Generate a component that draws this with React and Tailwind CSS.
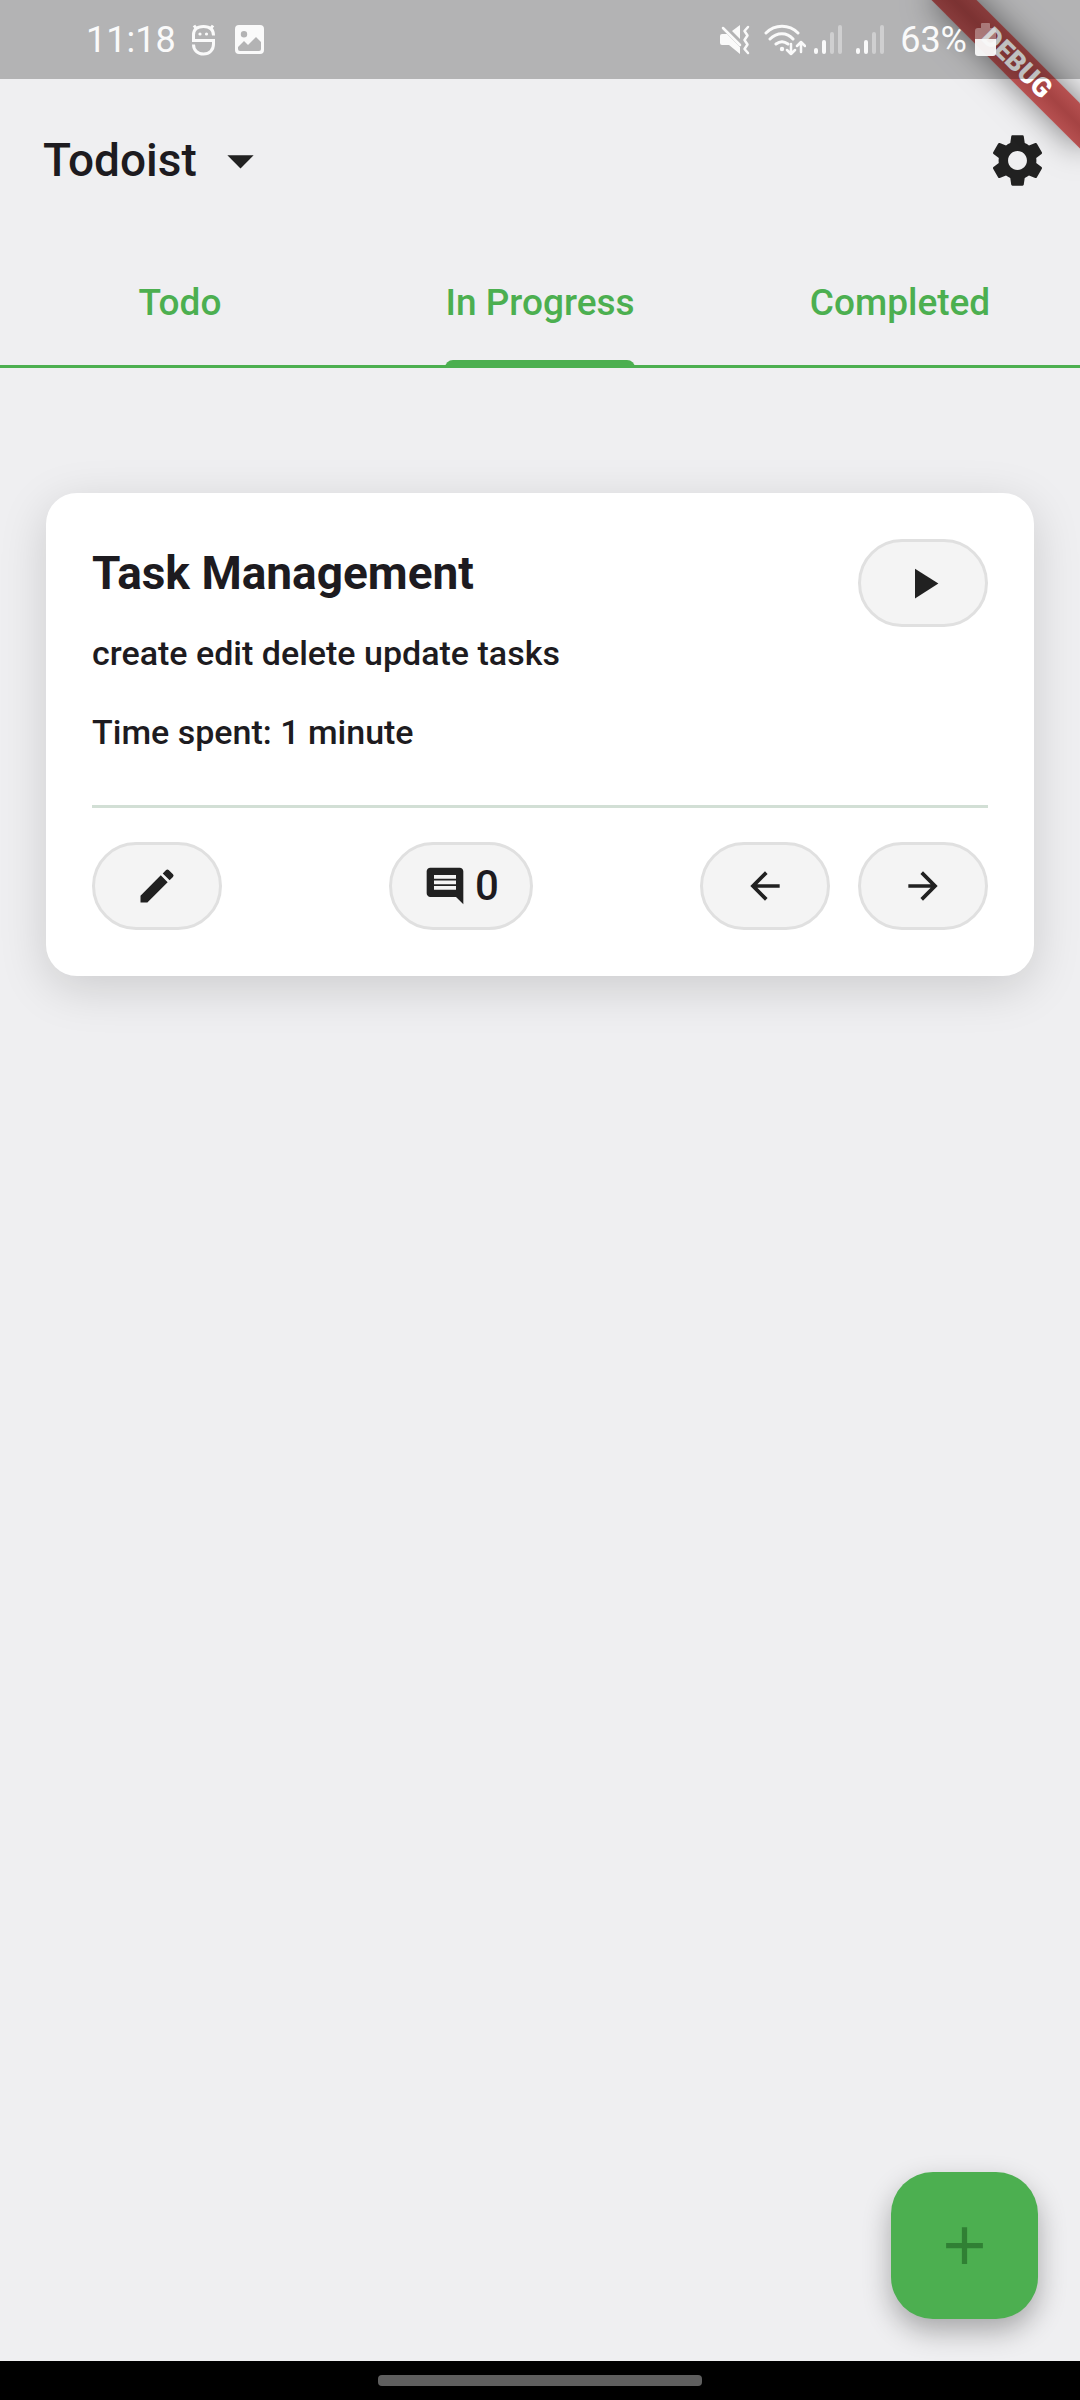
import { MdAdd, MdArrowBack, MdArrowDropDown, MdArrowForward, MdComment, MdEdit, MdPlayArrow, MdSettings } from "react-icons/md";

function GameIcon() {
  return (
    <svg width="23" height="32" viewBox="0 0 23 32" fill="none" stroke="#fafafa" strokeWidth="3" aria-hidden="true">
      <path d="M21.500 11.500C21.500 5.500 18 2.500 11.500 2.500S1.500 5.500 1.500 11v5.500h20V20c0 6-4 10-10 10S1.500 26 1.500 20.500" />
      <path d="M4.500 5 2 1.500M18.500 5 21 1.500" />
      <circle cx="8" cy="10" r="1.600" fill="#fafafa" stroke="none" />
      <circle cx="14.500" cy="10" r="1.600" fill="#fafafa" stroke="none" />
    </svg>
  );
}

function GalleryIcon() {
  return (
    <svg width="29" height="29" viewBox="0 0 29 29" aria-hidden="true">
      <path
        fill="#fafafa"
        fillRule="evenodd"
        d="M4 0h21a4 4 0 0 1 4 4v21a4 4 0 0 1-4 4H4a4 4 0 0 1-4-4V4a4 4 0 0 1 4-4ZM9 6a3.200 3.200 0 1 0 0 6.400A3.200 3.200 0 0 0 9 6ZM3 22v2a2 2 0 0 0 2 2h19a2 2 0 0 0 2-2v-7l-5-5-8 8-4-4Z"
      />
    </svg>
  );
}

function MutedIcon() {
  return (
    <svg width="30" height="30" viewBox="0 0 30 30" aria-hidden="true">
      <path fill="#fafafa" d="M2 9h5l13 13v7L9 20H2a2 2 0 0 1-2-2v-7a2 2 0 0 1 2-2ZM12 6l8-6v14Z" />
      <path fill="none" stroke="#fafafa" strokeWidth="2.500" strokeLinecap="round" strokeLinejoin="round" d="m3 3 17 17M28 2l-3.500 4 3 4.500-3 4.500 3 4.500-3 4.500 3.500 4" />
    </svg>
  );
}

function WifiIcon() {
  return (
    <svg width="42" height="32" viewBox="0 0 42 32" fill="none" stroke="#fafafa" strokeWidth="3" strokeLinecap="round" strokeLinejoin="round" aria-hidden="true">
      <path d="M2 9c9-9 23-9 32 0M6 15c7-7 17-7 23 0M12 20c4-3 8-3 12 0" />
      <circle cx="18" cy="25" r="2.200" fill="#fafafa" stroke="none" />
      <path strokeWidth="2.500" d="M27 20v10m-4-4 4 4 4-4M37 28V18m-4 4 4-4 4 4" />
    </svg>
  );
}

function SignalIcon() {
  return (
    <svg width="28" height="30" viewBox="0 0 28 30" fill="#fafafa" aria-hidden="true">
      <rect x="0" y="23" width="4" height="6" rx="2" />
      <rect x="8" y="15" width="4" height="14" rx="2" />
      <rect x="16" y="7" width="4" height="22" rx="2" opacity=".4" />
      <rect x="24" y="0" width="4" height="29" rx="2" opacity=".4" />
    </svg>
  );
}

function BatteryIcon() {
  return (
    <svg width="21" height="33" viewBox="0 0 21 33" fill="#fafafa" aria-hidden="true">
      <path opacity=".35" d="M6 1a1 1 0 0 1 1-1h7a1 1 0 0 1 1 1v4h3a3 3 0 0 1 3 3v8H0V8a3 3 0 0 1 3-3h3Z" />
      <path opacity=".95" d="M0 16h21v14a3 3 0 0 1-3 3H3a3 3 0 0 1-3-3Z" />
    </svg>
  );
}

function StatusBar() {
  return (
    <div className="relative z-20 flex h-[79px] items-center justify-between bg-black/25 pr-[84px] pl-[86px] text-[36px] leading-[40px] text-[#fafafa]">
      <div className="flex items-center">
        <span>11:18</span>
        <span className="ml-4"><GameIcon /></span>
        <span className="ml-5"><GalleryIcon /></span>
      </div>
      <div className="flex items-center">
        <MutedIcon />
        <span className="ml-3.5"><WifiIcon /></span>
        <span className="ml-2"><SignalIcon /></span>
        <span className="ml-3.5"><SignalIcon /></span>
        <span className="ml-4">63%</span>
        <span className="ml-2"><BatteryIcon /></span>
      </div>
    </div>
  );
}

const tabs = ["Todo", "In Progress", "Completed"];

function Tab({ label, selected }) {
  return (
    <button role="tab" aria-selected={selected} className="flex h-[127px] flex-1 justify-center text-[37px] leading-[43px] font-medium text-[#4caf50]">
      <span className="relative flex h-full items-center pb-1">
        {label}
        {selected && <span className="absolute inset-x-0 bottom-0 h-2 rounded-t-lg bg-[#4caf50]" />}
      </span>
    </button>
  );
}

function PillButton({ label, children }) {
  return (
    <button aria-label={label} className="flex h-[88px] min-w-[130px] items-center justify-center gap-2 rounded-full border-3 border-[#e0e0e0] bg-[#f4f4f4] px-[31px] text-[#212121]">
      {children}
    </button>
  );
}

function TaskCard() {
  return (
    <article className="mx-[46px] mt-[125px] rounded-[31px] bg-white p-[46px] text-[#1d1b20] shadow-[0_12px_48px_rgba(0,0,0,0.15)]">
      <div className="flex items-start justify-between">
        <div className="pt-1">
          <h2 className="text-[46px] leading-[60px] font-bold">Task Management</h2>
          <p className="mt-[26px] text-[34px] leading-[48px] font-medium">create edit delete update tasks</p>
          <p className="mt-[31px] text-[34px] leading-[48px] font-medium">Time spent: 1 minute</p>
        </div>
        <PillButton label="Start timer"><MdPlayArrow size={51} /></PillButton>
      </div>
      <hr className="mt-[49px] mb-[34px] border-t-3 border-[#d2dfd5]" />
      <div className="flex items-center justify-between">
        <PillButton label="Edit task"><MdEdit size={44} /></PillButton>
        <PillButton label="Comments: 0">
          <MdComment size={44} />
          <span className="text-[42px] leading-[48px] font-medium text-[#1d1b20]">0</span>
        </PillButton>
        <div className="flex gap-7">
          <PillButton label="Move to previous list"><MdArrowBack size={44} /></PillButton>
          <PillButton label="Move to next list"><MdArrowForward size={44} /></PillButton>
        </div>
      </div>
    </article>
  );
}

export default function App() {
  return (
    <div className="relative flex min-h-screen flex-col overflow-hidden bg-[#efeff1] font-[Roboto,sans-serif]">
      <div className="absolute top-[47px] right-[-42px] z-10 flex h-8 w-[210px] rotate-45 items-center justify-center bg-linear-to-b from-[#b65050] via-[#a54343] to-[#b65050] text-[27px] leading-8 font-black text-white shadow-[0_0_32px_rgba(0,0,0,0.5)]">
        DEBUG
      </div>
      <StatusBar />
      <header className="flex h-[162px] items-center justify-between pr-[31px] pl-[43px] text-[#212121]">
        <button aria-haspopup="listbox" className="flex items-center gap-3 text-[46px] leading-[56px] font-medium text-[#1d1b20]">
          Todoist
          <MdArrowDropDown size={63} color="#212121" />
        </button>
        <button aria-label="Settings"><MdSettings size={63} /></button>
      </header>
      <div role="tablist" className="flex shadow-[inset_0_-3px_0_#4caf50]">
        {tabs.map((label) => <Tab key={label} label={label} selected={label === "In Progress"} />)}
      </div>
      <main className="flex flex-1 flex-col">
        <TaskCard />
        <button aria-label="Add task" className="mt-auto mr-[42px] mb-[42px] flex size-[147px] items-center justify-center self-end rounded-[42px] bg-[#4caf50] text-[#308034] shadow-[0_12px_28px_rgba(0,0,0,0.3)]">
          <MdAdd size={63} />
        </button>
      </main>
      <footer className="flex h-[39px] items-center justify-center bg-black">
        <div className="h-[11px] w-[30%] rounded-sm bg-[#5f5f5f]" />
      </footer>
    </div>
  );
}
